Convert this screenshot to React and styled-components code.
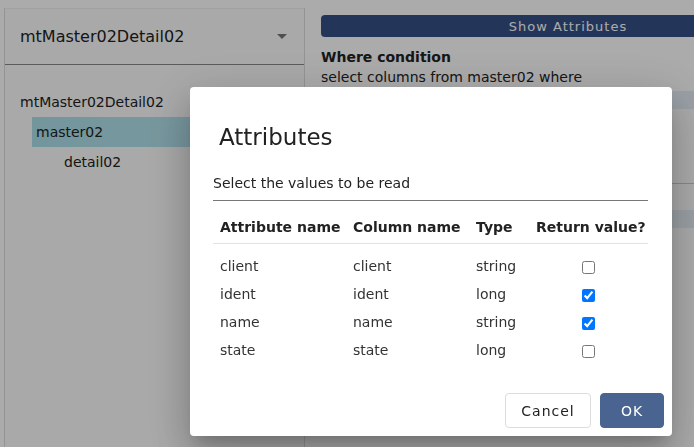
import React from 'react'
import styled, { createGlobalStyle } from 'styled-components'

const GlobalStyle = createGlobalStyle`
    html, body {
        margin: 0;
        padding: 0;
        width: 694px;
        height: 447px;
        overflow: hidden;
        background: #fff;
        font-family: 'DejaVu Sans', 'Liberation Sans', sans-serif;
        color: #333;
    }
`

const attributes = [
    { name: 'client', column: 'client', type: 'string', returned: false },
    { name: 'ident', column: 'ident', type: 'long', returned: true },
    { name: 'name', column: 'name', type: 'string', returned: true },
    { name: 'state', column: 'state', type: 'long', returned: false },
]

const App = () => {
    return (
        <>
            <GlobalStyle />
            <Page>
                <Sidebar>
                    <SelectBox>
                        <span>mtMaster02Detail02</span>
                        <Caret />
                    </SelectBox>
                    <Tree>
                        <TreeItem $level={0}>mtMaster02Detail02</TreeItem>
                        <TreeItem $level={1} $active>
                            master02
                        </TreeItem>
                        <TreeItem $level={2}>detail02</TreeItem>
                    </Tree>
                </Sidebar>
                <Main>
                    <MainInner>
                        <ShowButton>Show Attributes</ShowButton>
                        <Label>Where condition</Label>
                        <Query>select columns from master02 where</Query>
                        <Band />
                        <Editor />
                        <Band />
                    </MainInner>
                </Main>
            </Page>

            <Overlay>
                <Dialog>
                    <Title>Attributes</Title>
                    <Hint>Select the values to be read</Hint>
                    <Table>
                        <thead>
                            <tr>
                                <Th>Attribute name</Th>
                                <Th>Column name</Th>
                                <Th>Type</Th>
                                <Th>Return value?</Th>
                            </tr>
                        </thead>
                        <tbody>
                            {attributes.map((a, i) => (
                                <Row key={a.name} $first={i === 0}>
                                    <Td>{a.name}</Td>
                                    <Td>{a.column}</Td>
                                    <Td>{a.type}</Td>
                                    <Td $center>
                                        <input type='checkbox' defaultChecked={a.returned} />
                                    </Td>
                                </Row>
                            ))}
                        </tbody>
                    </Table>
                    <Actions>
                        <Button $width={86}>Cancel</Button>
                        <Button $width={64} $primary>
                            OK
                        </Button>
                    </Actions>
                </Dialog>
            </Overlay>
        </>
    )
}

const Page = styled.div`
    display: flex;
    align-items: flex-start;
    padding-top: 8px;
    height: 439px;
`

const Sidebar = styled.aside`
    flex-shrink: 0;
    width: 299px;
    margin-left: 4px;
    height: 100%;
    border-left: 1px solid #ddd;
    border-right: 1px solid #ddd;
    background: #fcfcfc;
`

const SelectBox = styled.div`
    display: flex;
    align-items: center;
    justify-content: space-between;
    height: 55px;
    padding: 0 17px 0 15px;
    background: #fdfdfd;
    border-bottom: 1px solid #888;
    border-top: 1px solid #f0f0f0;
    font-size: 16px;
    color: #222;
`

const Caret = styled.span`
    width: 0;
    height: 0;
    border-left: 5px solid transparent;
    border-right: 5px solid transparent;
    border-top: 5px solid #777;
`

const Tree = styled.ul`
    list-style: none;
    margin: 0;
    padding: 22px 0 0 27px;
`

const TreeItem = styled.li`
    display: flex;
    align-items: center;
    height: 30px;
    margin-left: ${(p) => (p.$level === 0 ? -12 : p.$level === 1 ? 0 : 32)}px;
    padding-left: ${(p) => (p.$level === 1 ? 4 : 0)}px;
    font-size: 14px;
    color: #222;
    background: ${(p) =>
        p.$active ? 'linear-gradient(90deg, #acdfe9 0%, #b5e3ee 60%, #cfe9ef 100%)' : 'transparent'};
`

const Main = styled.main`
    flex: 1;
    min-width: 0;
    overflow: hidden;
    margin-left: 16px;
    padding-top: 7px;
`

const MainInner = styled.div`
    width: 494px;
`

const ShowButton = styled.div`
    height: 22px;
    display: flex;
    align-items: center;
    justify-content: center;
    background: #355187;
    color: #fff;
    border-radius: 4px;
    font-size: 13px;
    letter-spacing: 1px;
`

const Label = styled.div`
    margin-top: 12px;
    font-size: 14px;
    font-weight: bold;
    color: #222;
`

const Query = styled.div`
    margin-top: 4px;
    font-size: 14px;
    color: #222;
`

const Band = styled.div`
    margin-top: 6px;
    height: 18px;
    background: #e6f0f7;
`

const Editor = styled.div`
    height: 74px;
    border-bottom: 1px solid #ccc;
    margin-bottom: 26px;
`

const Overlay = styled.div`
    position: fixed;
    inset: 0;
    display: flex;
    justify-content: flex-end;
    align-items: flex-start;
    padding: 87px 22px 0 0;
    background: rgba(0, 0, 0, 0.33);
`

const Dialog = styled.div`
    width: 482px;
    height: 349px;
    box-sizing: border-box;
    padding: 34px 24px 8px 23px;
    display: flex;
    flex-direction: column;
    background: #fff;
    border-radius: 4px;
    box-shadow: 0 11px 15px -7px rgba(0, 0, 0, 0.2), 0 24px 38px 3px rgba(0, 0, 0, 0.14),
        0 9px 46px 8px rgba(0, 0, 0, 0.12);
`

const Title = styled.h2`
    margin: 0 0 0 6px;
    font-size: 23px;
    font-weight: normal;
    line-height: 32px;
    color: #222;
`

const Hint = styled.div`
    margin-top: 21px;
    padding-bottom: 8px;
    border-bottom: 1px solid #777;
    font-size: 14px;
    line-height: 18px;
    color: #222;
`

const Table = styled.table`
    margin-top: 9px;
    border-collapse: collapse;
    width: 435px;
    table-layout: fixed;

    th:nth-child(1) { width: 126px; }
    th:nth-child(2) { width: 116px; }
    th:nth-child(3) { width: 53px; }
`

const Th = styled.th`
    height: 33px;
    padding: 0 0 0 7px;
    text-align: left;
    white-space: nowrap;
    font-size: 14px;
    font-weight: 600;
    color: #222;
    border-bottom: 1px solid #e2e2e2;
`

const Row = styled.tr`
    height: ${(p) => (p.$first ? 37 : 28)}px;

    td {
        padding-top: ${(p) => (p.$first ? 9 : 0)}px;
    }
`

const Td = styled.td`
    padding-left: ${(p) => (p.$center ? 0 : 7)}px;
    text-align: ${(p) => (p.$center ? 'center' : 'left')};
    font-size: 14px;
    color: #333;

    input {
        margin: 0;
        width: 13px;
        height: 13px;
        vertical-align: middle;
    }
`

const Actions = styled.div`
    margin-top: auto;
    display: flex;
    justify-content: flex-end;
    gap: 9px;
    margin-right: -16px;
`

const Button = styled.button`
    width: ${(p) => p.$width}px;
    height: 35px;
    padding: 0;
    border-radius: 4px;
    border: 1px solid ${(p) => (p.$primary ? '#4a6491' : '#ddd')};
    background: ${(p) => (p.$primary ? '#4a6491' : '#fff')};
    color: ${(p) => (p.$primary ? '#fff' : '#222')};
    font-family: inherit;
    font-size: 14px;
    letter-spacing: 1px;
`

export default App
